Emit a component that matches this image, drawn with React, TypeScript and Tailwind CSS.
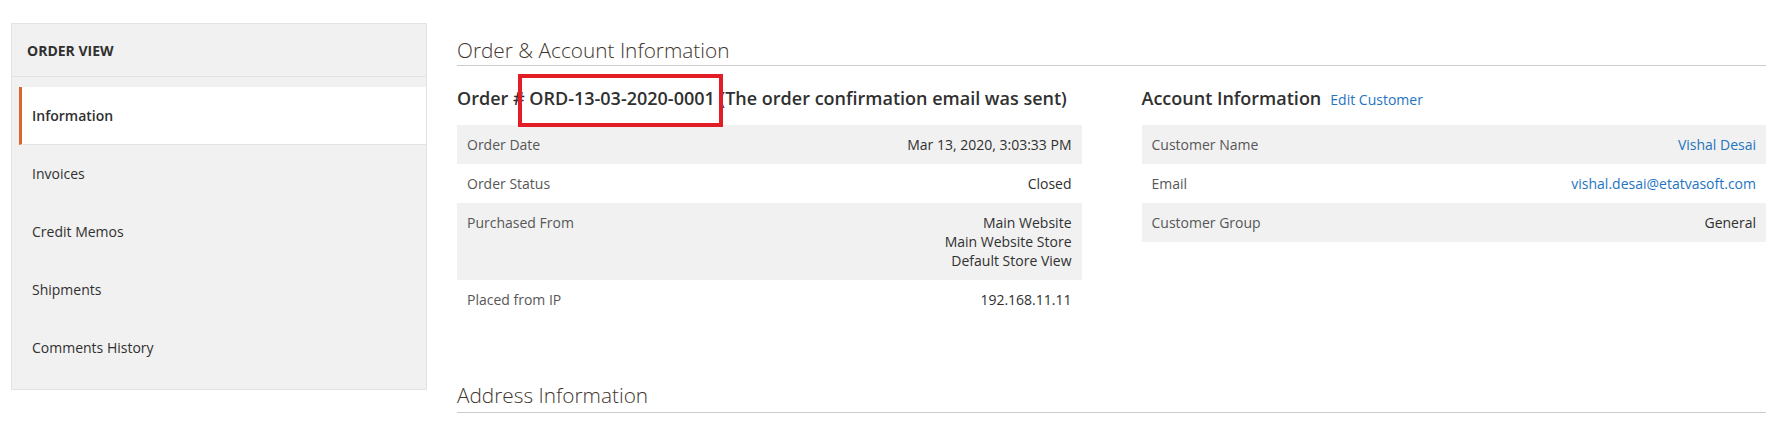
import React from "react";

const navItems = ["Information", "Invoices", "Credit Memos", "Shipments", "Comments History"];

const orderRows: { label: string; value: string[] }[] = [
  { label: "Order Date", value: ["Mar 13, 2020, 3:03:33 PM"] },
  { label: "Order Status", value: ["Closed"] },
  { label: "Purchased From", value: ["Main Website", "Main Website Store", "Default Store View"] },
  { label: "Placed from IP", value: ["192.168.11.11"] },
];

const accountRows: { label: string; value: string; link?: boolean }[] = [
  { label: "Customer Name", value: "Vishal Desai", link: true },
  { label: "Email", value: "vishal.desai@etatvasoft.com", link: true },
  { label: "Customer Group", value: "General" },
];

function SectionTitle({ children, bottom = 3 }: { children: React.ReactNode; bottom?: number }) {
  return (
    <div className={bottom === 3 ? "pt-[15px] pb-[3px] border-b border-[#cccccc]" : "pt-[13px] pb-[5px] border-b border-[#cccccc]"}>
      <h2 className="text-[20.8px] leading-[24px] font-light text-[#41362f]">{children}</h2>
    </div>
  );
}

export default function App() {
  return (
    <div className="flex min-h-[431px] bg-white pl-[11px] pr-[23px] pt-[23px] font-['Open_Sans',sans-serif] text-[#303030]">
      {/* side nav */}
      <aside className="w-[416px] h-[367px] shrink-0 bg-[#f1f1f1] border border-[#e3e3e3]">
        <div className="h-[53px] px-[15px] flex items-center border-b border-[#e3e3e3] text-[14px] font-bold uppercase text-[#303030]">
          Order View
        </div>
        <ul className="mt-[10px]">
          {navItems.map((item, i) => (
            <li
              key={item}
              className={
                i === 0
                  ? "ml-[7px] h-[57.8px] pl-[10px] flex items-center border-l-[3px] border-[#d9662b] bg-white border-b border-b-[#e3e3e3] text-[14px] font-semibold text-[#303030]"
                  : "ml-[7px] h-[57.8px] pl-[10px] flex items-center border-l-[3px] border-transparent text-[14px] text-[#303030]"
              }
            >
              {item}
            </li>
          ))}
        </ul>
      </aside>

      <main className="ml-[30px] flex-1">
        <SectionTitle>Order &amp; Account Information</SectionTitle>

        <div className="grid grid-cols-2 gap-x-[60px] mt-[20px]">
          <div>
            <h3 className="h-[24px] text-[18px] leading-[24px] font-semibold text-[#303030] mb-[14.5px] whitespace-nowrap">
              Order #{" "}
              <span className="relative">
                ORD-13-03-2020-0001
                <span className="absolute -left-[11px] -right-[8px] -top-[12px] -bottom-[17px] border-4 border-[#e31d25]" />
              </span>{" "}
              (The order confirmation email was sent)
            </h3>
            <table className="w-full text-[14px] leading-[19px]">
              <tbody>
                {orderRows.map((r, i) => (
                  <tr key={r.label} className={i % 2 === 0 ? "bg-[#f1f1f1]" : "bg-white"}>
                    <th className="text-left align-top font-normal text-[#575757] px-[10px] py-[10px]">{r.label}</th>
                    <td className="text-right align-top text-[#303030] px-[10px] py-[10px]">
                      {r.value.map((v) => (
                        <div key={v}>{v}</div>
                      ))}
                    </td>
                  </tr>
                ))}
              </tbody>
            </table>
          </div>

          <div>
            <h3 className="h-[24px] flex items-baseline text-[18px] leading-[24px] font-semibold text-[#303030] mb-[14.5px] whitespace-nowrap">
              Account Information
              <a className="ml-[9px] text-[14px] leading-[24px] font-normal text-[#2574bf]">Edit Customer</a>
            </h3>
            <table className="w-full text-[14px] leading-[19px]">
              <tbody>
                {accountRows.map((r, i) => (
                  <tr key={r.label} className={i % 2 === 0 ? "bg-[#f1f1f1]" : "bg-white"}>
                    <th className="text-left font-normal text-[#575757] px-[10px] py-[10px]">{r.label}</th>
                    <td className={r.link ? "text-right text-[#2574bf] px-[10px] py-[10px]" : "text-right text-[#303030] px-[10px] py-[10px]"}>
                      {r.value}
                    </td>
                  </tr>
                ))}
              </tbody>
            </table>
          </div>
        </div>

        <div className="mt-[51px]">
          <SectionTitle bottom={5}>Address Information</SectionTitle>
        </div>
      </main>
    </div>
  );
}
